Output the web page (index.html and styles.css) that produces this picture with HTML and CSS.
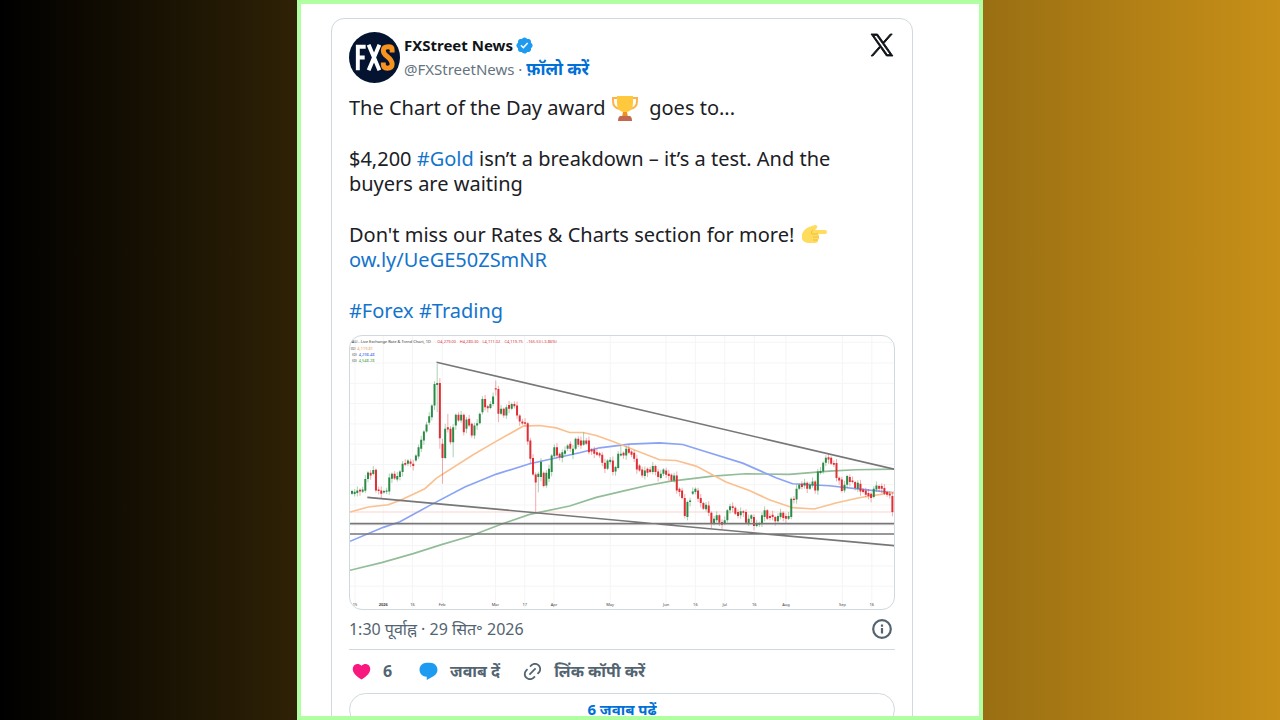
FILE: index.html
```
<!DOCTYPE html>
<html lang="hi">
<head>
    <meta charset="UTF-8">
    <meta name="viewport" content="width=device-width, initial-scale=1.0">
    <title>FXStreet News</title>
    <link rel="stylesheet" href="styles.css">
</head>
<body>
    <main class="frame">
        <article class="tweet">
            <header class="tweet-header">
                <svg class="avatar" viewBox="0 0 52 52" role="img" aria-label="FXStreet">
                    <circle cx="26" cy="26" r="26" fill="#04132f"/>
                    <g fill="none" stroke-width="4">
                        <path d="M9 39V15H17M9 26H16" stroke="#fff"/>
                        <path d="M20 13L31 39M31 13L20 39" stroke="#fff"/>
                        <path d="M44 21V18Q44 15 40 15Q35 15 35 19Q35 22 39 25Q44 29 44 33Q44 37 39 37Q35 37 35 33V31" stroke="#f7931e" stroke-width="5"/>
                    </g>
                </svg>
                <div class="author">
                    <div class="name">
                        <a href="#">FXStreet News</a>
                        <svg class="badge" viewBox="0 0 22 22" aria-hidden="true"><path fill="#1d9bf0" d="M20.396 11c-.018-.646-.215-1.275-.57-1.816-.354-.54-.852-.972-1.438-1.246.223-.607.27-1.264.14-1.897-.131-.634-.437-1.218-.882-1.687-.47-.445-1.053-.75-1.687-.882-.633-.13-1.29-.083-1.897.14-.273-.587-.704-1.086-1.245-1.44S11.647 1.62 11 1.604c-.646.017-1.273.213-1.813.568s-.969.854-1.24 1.44c-.608-.223-1.267-.272-1.902-.14-.635.13-1.22.436-1.69.882-.445.47-.749 1.055-.878 1.688-.13.633-.08 1.29.144 1.896-.587.274-1.087.705-1.443 1.245-.356.54-.555 1.17-.574 1.817.02.647.218 1.276.574 1.817.356.54.856.972 1.443 1.245-.224.606-.274 1.263-.144 1.896.13.634.433 1.218.877 1.688.47.443 1.054.747 1.687.878.633.132 1.29.084 1.897-.136.274.586.705 1.084 1.246 1.439.54.354 1.17.551 1.816.569.647-.016 1.276-.213 1.817-.567s.972-.854 1.245-1.44c.604.239 1.266.296 1.903.164.636-.132 1.22-.447 1.68-.907.46-.46.776-1.044.908-1.681s.075-1.299-.165-1.903c.586-.274 1.084-.705 1.439-1.246.354-.54.551-1.17.569-1.816zM9.662 14.85l-3.429-3.428 1.293-1.302 2.072 2.072 4.4-4.794 1.347 1.246z"/></svg>
                    </div>
                    <div class="handle"><a href="#">@FXStreetNews</a> · <a class="follow" href="#">फ़ॉलो करें</a></div>
                </div>
                <a class="x-logo" href="#" aria-label="X">
                    <svg viewBox="0 0 24 24" aria-hidden="true"><path fill="#0f1419" stroke="#0f1419" stroke-width="1" d="M14.258 10.152L23.176 0h-2.113l-7.747 8.813L7.133 0H0l9.352 13.328L0 23.973h2.113l8.176-9.309 6.531 9.309h7.133zm-2.895 3.293l-.949-1.328L2.875 1.56h3.246l6.086 8.523.945 1.328 7.91 11.078h-3.246z"/></svg>
                </a>
            </header>

            <div class="tweet-text">
                <p>The Chart of the Day award
                    <svg class="emoji" viewBox="0 0 26 26" role="img" aria-label="trophy">
                        <path d="M5 3H1V6Q1 13 8 14M21 3H25V6Q25 13 18 14" fill="none" stroke="#fdb34b" stroke-width="2"/>
                        <path d="M5 1H21V8Q21 16 15 17V22H11V17Q5 16 5 8Z" fill="#ffc83d"/>
                        <path d="M11 17H15L16 22H10Z" fill="#f19020"/>
                        <path d="M8 21H18Q20 22 20 26H6Q6 22 8 21Z" fill="#c1694f"/>
                    </svg>
                    &nbsp;goes to...</p>
                <p>$4,200 <a href="#">#Gold</a> isn’t a breakdown – it’s a test. And the buyers are waiting</p>
                <p>Don't miss our Rates &amp; Charts section for more!
                    <svg class="emoji" viewBox="0 0 26 26" role="img" aria-label="pointing right">
                        <path d="M1 12Q3 7 8 5L14 3Q17 3 16 6L14 8H24Q26 8 26 10T24 12H17Q19 13 18 15Q19 17 17 18Q17 21 14 21H7Q2 20 1 17Z" fill="#ffdc5d"/>
                        <path d="M17 12H11Q9 10 12 8M18 15H12M17 18H12" fill="none" stroke="#efbd45" stroke-width="1"/>
                    </svg>
                    <a href="#">ow.ly/UeGE50ZSmNR</a></p>
                <p><a href="#">#Forex</a> <a href="#">#Trading</a></p>
            </div>

            <svg class="chart" viewBox="0 0 1635 819" role="img" aria-label="Gold daily chart">
                <path class="grid" d="M15 0V819M100 0V819M188 0V819M277 0V819M437 0V819M525 0V819M613 0V819M782 0V819M950 0V819M1038 0V819M1126 0V819M1215 0V819M1310 0V819M1480 0V819M1568 0V819M0 19H1635M0 81H1635M0 142H1635M0 203H1635M0 264H1635M0 325H1635M0 386H1635M0 447H1635M0 508H1635M0 569H1635M0 630H1635M0 691H1635M0 752H1635"/>
                <path class="price" d="M0 529H1635"/>
                <polyline class="ma green" points="0,704 95,681 190,654 275,627 360,602 450,567 540,536 660,511 740,485 820,466 890,450 960,437 1090,421 1190,414 1320,416 1440,406 1520,402 1635,400"/>
                <polyline class="ma blue" points="0,617 100,575 150,558 240,509 345,454 440,415 540,384 690,351 750,336 840,325 930,321 1000,326 1060,345 1180,382 1280,426 1330,444 1440,450 1540,461 1635,471"/>
                <polyline class="ma orange" points="0,529 55,514 115,507 150,494 225,459 260,427 370,357 435,319 520,271 570,269 620,276 660,290 700,290 740,299 790,317 930,372 980,374 1040,391 1130,439 1200,464 1260,492 1330,516 1395,520 1460,502 1530,486 1635,470"/>
                <g id="candles"></g>
                <path class="trend" d="M260 79L1635 400M52 485L1635 630M0 564H1635M0 595H1635"/>
                <g class="legend">
                    <text x="2" y="22">(AU - Live Exchange Rate &amp; Trend Chart, 1D</text>
                    <text class="red" x="262" y="22">O4,279.00</text>
                    <text class="red" x="330" y="22">H4,280.30</text>
                    <text class="red" x="398" y="22">L4,111.02</text>
                    <text class="red" x="464" y="22">C4,119.75</text>
                    <text class="red" x="532" y="22">-165.53 (-3.86%)</text>
                    <text x="2" y="41">(0)</text><text class="orange" x="22" y="41">4,119.81</text>
                    <text x="6" y="60">(0)</text><text class="blue" x="26" y="60">4,298.48</text>
                    <text x="6" y="79">(0)</text><text class="green" x="26" y="79">4,548.28</text>
                </g>
                <g class="axis">
                    <text x="15" y="811">15</text><text x="100" y="811" class="year">2026</text><text x="188" y="811">16</text>
                    <text x="277" y="811">Feb</text><text x="437" y="811">Mar</text><text x="525" y="811">17</text>
                    <text x="613" y="811">Apr</text><text x="782" y="811">May</text><text x="950" y="811">Jun</text>
                    <text x="1038" y="811">16</text><text x="1126" y="811">Jul</text><text x="1215" y="811">16</text>
                    <text x="1310" y="811">Aug</text><text x="1480" y="811">Sep</text><text x="1568" y="811">16</text>
                </g>
            </svg>

            <div class="meta">
                <a href="#">1:30 पूर्वाह्न · 29 सित॰ 2026</a>
                <button class="info" aria-label="Info">
                    <svg viewBox="0 0 20 20" aria-hidden="true"><circle cx="10" cy="10" r="8" fill="none" stroke="#536471" stroke-width="2"/><path d="M10 9V14M10 6V8" stroke="#536471" stroke-width="2"/></svg>
                </button>
            </div>

            <div class="actions">
                <button>
                    <svg class="icon" viewBox="0 0 24 24" aria-hidden="true"><path fill="#f91880" d="M20.884 13.19c-1.351 2.48-4.001 5.12-8.379 7.67l-.503.3-.504-.3c-4.379-2.55-7.029-5.19-8.382-7.67-1.36-2.5-1.41-4.86-.514-6.67.887-1.79 2.647-2.91 4.601-3.01 1.651-.09 3.368.56 4.798 2.01 1.429-1.45 3.146-2.1 4.796-2.01 1.954.1 3.714 1.22 4.601 3.01.896 1.81.846 4.17-.514 6.67z"/></svg>
                    <span>6</span>
                </button>
                <button>
                    <svg class="icon" viewBox="0 0 24 24" aria-hidden="true"><path fill="#1d9bf0" d="M1.751 10c0-4.42 3.584-8 8.005-8h4.366c4.49 0 8.129 3.64 8.129 8.13 0 2.96-1.607 5.68-4.196 7.11l-8.054 4.46v-3.69h-.067c-4.49.1-8.183-3.51-8.183-8.01z"/></svg>
                    <span>जवाब दें</span>
                </button>
                <button>
                    <svg class="icon" viewBox="0 0 24 24" aria-hidden="true"><path fill="#536471" d="M18.36 5.64c-1.95-1.96-5.11-1.96-7.07 0L9.88 7.05 8.46 5.64l1.42-1.42c2.73-2.73 7.16-2.73 9.9 0 2.73 2.74 2.73 7.17 0 9.9l-1.42 1.42-1.41-1.42 1.41-1.41c1.96-1.96 1.96-5.12 0-7.07zm-2.12 3.53l-7.07 7.07-1.41-1.41 7.07-7.07 1.41 1.41zm-12.02.71l1.42-1.42 1.41 1.42-1.41 1.41c-1.96 1.96-1.96 5.12 0 7.07 1.95 1.96 5.11 1.96 7.07 0l1.41-1.41 1.42 1.41-1.42 1.42c-2.73 2.73-7.16 2.73-9.9 0-2.73-2.74-2.73-7.17 0-9.9z"/></svg>
                    <span>लिंक कॉपी करें</span>
                </button>
            </div>

            <a class="replies" href="#">6 जवाब पढें</a>
        </article>
    </main>

    <script>
        // One candle per trading day: direction, body top, body bottom, optional high and low
        const candles = `g466,474 g468,475 g464,472 r462,467 g461,468 g430,465 g410,430 r411,419 g403,415 r402,464
            r461,466 r464,474 g466,470 g464,468 g425,467 g414,429 r414,428 g421,431 g407,424 g384,409
            r382,387 g374,384 r377,384 r384,391 g359,374 g334,362 g312,339 g287,314 g266,287 g241,261
            g209,244 g144,209 g141,147,84,229 r141,307,127,339 r324,367,309,444 g279,367,264,370 r274,281,234,290 r279,319 g274,319,265,364 g237,269
            r237,254 g237,254 r237,289 g251,279 r249,269 r264,299 g269,299 g262,269 g234,262 g189,229
            r189,214 r211,217 g204,216 g182,204 r157,161,134,179 r159,234,150,259 g219,234 r219,239 g214,239 r207,219
            g204,219 r204,211 r209,239 r239,257 r257,263 r259,264 r262,317 r314,369 r367,416 r416,440,410,530
            g414,424,408,470 g379,424 r411,451 g411,449 g399,429 g359,409 g334,361 r334,359 r354,364 g349,367
            g344,354 g329,339 r324,339 g339,357 g309,339 r309,327 r314,329 g314,327,290,330 r314,324 r314,349
            r341,347 r341,354 r349,357 r352,359 r357,381 r381,399 g374,399 g372,379 r374,409 g394,407
            g354,397 g354,359,329,362 r351,359 g339,359 r339,351 r347,357 r351,369 r369,401 r389,404 r401,419
            g404,421 r399,411 r401,409 g391,409 r391,409 r407,424 g414,427 g401,414 r404,417 r414,421
            r417,434 g419,434 r419,464 r459,469 r464,487 r487,541 g499,544 g494,499 g467,474 g459,469
            r464,489 r487,502 r502,519 g507,521 r509,531 r531,564 g549,565 g539,554 r539,561 r559,567
            g554,565 g524,554 g512,524 r512,517 r516,534 r529,541 g527,539 r527,531 r529,561 g549,564
            g539,549 r544,571 g564,571 g562,567 g539,564 g524,544 r524,549 r541,547 r537,544 r544,557
            g541,557 g531,544 r531,547 r541,549 g541,549 g489,544 r489,493 g459,491 g447,459 r444,454
            g441,449 r441,459 g447,459 g437,449 r437,464 g407,464 g406,412 g381,407 g366,381 r364,371
            r366,384 r382,387 r382,427 r426,434 r431,466 g447,464 g421,447 r424,439 r434,439 r439,457
            g441,459 r444,467 r461,469 r464,477 r472,481 r474,487 g459,484 g449,461 r451,459 r451,459
            r457,474 r469,477 r474,479 r481,529`.split(/\s+/);
        const paths = { g: ['', ''], r: ['', ''] };

        candles.forEach((candle, i) => {
            const x = 6 + i * 8;
            const [top, bottom, high, low] = candle.slice(1).split(',').map(Number);
            const path = paths[candle[0]];
            path[0] += `M${x} ${top}V${bottom}`;
            path[1] += `M${x} ${high || top - 4 - i % 3 * 4}V${low || bottom + 4 + i % 4 * 3}`;
        });

        document.getElementById('candles').innerHTML = ['g', 'r'].map(key =>
            `<path class="wick ${key}" d="${paths[key][1]}"/><path class="body ${key}" d="${paths[key][0]}"/>`
        ).join('');
    </script>
</body>
</html>
```
FILE: styles.css
```
* {
    box-sizing: border-box;
}
body {
    margin: 0;
    height: 100vh;
    overflow: hidden;
    display: flex;
    justify-content: center;
    font-family: 'Noto Sans', 'Open Sans', sans-serif;
    color: #1b2025;
    background: linear-gradient(90deg, #000 0%, #c89018 100%);
}
a {
    color: #006fd6;
    text-decoration: none;
}
button {
    border: none;
    background: none;
    padding: 0;
    font: inherit;
    color: inherit;
    cursor: pointer;
}
svg {
    display: block;
}
.frame {
    width: 53.6%;
    height: 100%;
    overflow: hidden;
    padding: 14px 66px 0 30px;
    background: #fff;
    border: 4px solid #b0ffa0;
}
.tweet {
    border: 1px solid #cfd9de;
    border-radius: 13px;
    padding: 13px 17px;
}
.tweet-header {
    display: flex;
    gap: 4px;
}
.avatar {
    width: 51px;
    height: 51px;
}
.author {
    flex: 1;
    font-size: 15px;
    line-height: 23px;
    padding-top: 2px;
}
.name {
    display: flex;
    align-items: center;
    gap: 2px;
    font-weight: 700;
}
.name a {
    color: #0f1419;
}
.badge {
    width: 19px;
    height: 19px;
}
.handle,
.handle a {
    color: #65737e;
}
.handle .follow {
    color: #006fd6;
    font-size: 17px;
    font-weight: 700;
}
.x-logo svg {
    width: 22px;
    height: 22px;
    margin: 2px 2px 0 0;
    overflow: visible;
}
.tweet-text {
    margin: 12px 0;
    font-size: 20px;
    line-height: 25px;
}
.tweet-text p {
    margin: 0 0 26px;
}
.tweet-text p:last-child {
    margin: 0;
}
.tweet-text a {
    color: #1474cc;
}
.emoji {
    display: inline-block;
    width: 26px;
    height: 26px;
    margin: -2px 1px -1px;
    vertical-align: -5px;
}
.chart {
    width: 100%;
    border: 1px solid #cfd9de;
    border-radius: 13px;
}
.chart path,
.chart polyline {
    fill: none;
}
.grid {
    stroke: #f5f5f5;
    stroke-width: 3;
}
.price {
    stroke: #fbd3d0;
    stroke-width: 3;
}
.ma {
    stroke-width: 5;
}
.ma.green {
    stroke: #93bd98;
}
.ma.blue {
    stroke: #8aa3f5;
}
.ma.orange {
    stroke: #fac090;
}
.trend {
    stroke: #777;
    stroke-width: 5;
}
.wick {
    stroke-width: 2;
    opacity: 0.6;
}
.body {
    stroke-width: 6;
}
.g {
    stroke: #2b8a45;
}
.r {
    stroke: #de2f36;
}
.legend,
.axis {
    font-size: 12px;
    fill: #444;
}
.legend .red {
    fill: #d8383e;
}
.legend .orange {
    fill: #f09a50;
}
.legend .blue {
    fill: #3560e0;
}
.legend .green {
    fill: #43a047;
}
.axis {
    text-anchor: middle;
}
.year {
    font-weight: 700;
}
.meta {
    display: flex;
    justify-content: space-between;
    align-items: center;
    height: 40px;
    border-bottom: 1px solid #cfd9de;
    font-size: 16px;
}
.meta a,
.info {
    color: #536471;
}
.info svg {
    width: 22px;
    height: 22px;
    margin-right: 2px;
}
.actions {
    display: flex;
    gap: 22px;
    height: 43px;
    padding-left: 2px;
    font-size: 16px;
    font-weight: 700;
    color: #536471;
}
.actions button {
    display: flex;
    align-items: center;
    gap: 11px;
}
.actions button:first-child {
    margin-right: 4px;
}
.icon {
    width: 21px;
    height: 21px;
}
.replies {
    display: block;
    border: 1px solid #cfd9de;
    border-radius: 20px;
    text-align: center;
    font-size: 15px;
    font-weight: 700;
    line-height: 31px;
}
```
